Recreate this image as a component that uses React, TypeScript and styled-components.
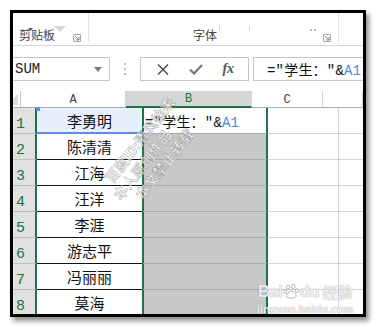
import * as React from 'react';
import styled, { createGlobalStyle } from 'styled-components';

const GlobalStyle = createGlobalStyle`
  html, body { margin: 0; padding: 0; background: #fff; }
  body {
    width: 377px;
    height: 327px;
    overflow: hidden;
    font-family: "Noto Sans CJK SC", sans-serif;
  }
`;

const GREEN = '#217346';

const Page = styled.div`
  padding: 10px 0 0 10px;
`;

const Frame = styled.div`
  position: relative;
  width: 350px;
  height: 301px;
  border: 3px solid #000;
  box-shadow: 3px 4px 5px rgba(0, 0, 0, 0.45);
  overflow: hidden;
  background: #fff;
  display: flex;
  flex-direction: column;
`;

/* ribbon */
const Ribbon = styled.div`
  height: 32px;
  flex-shrink: 0;
  display: flex;
  border-bottom: 1px solid #d4d4d4;
`;

const Group = styled.div<{ $w: number }>`
  position: relative;
  width: ${p => p.$w}px;
  flex-shrink: 0;
  box-sizing: border-box;
  display: flex;
  align-items: flex-end;
  justify-content: space-between;
  padding: 0 8px 3px 6px;
  &::after {
    content: '';
    position: absolute;
    right: 0;
    top: 0;
    bottom: 3px;
    width: 1px;
    background: #e1e1e1;
  }
`;

const GroupLabel = styled.span<{ $offset?: number }>`
  font-size: 12px;
  line-height: 14px;
  color: #444;
  margin-left: ${p => p.$offset ?? 0}px;
`;

const TopMark = styled.div<{ $x: number }>`
  position: absolute;
  top: 0;
  left: ${p => p.$x}px;
`;

/* formula bar */
const FormulaBar = styled.div`
  height: 45px;
  flex-shrink: 0;
  box-sizing: border-box;
  padding-top: 11px;
  display: flex;
  align-items: flex-start;
`;

const NameBox = styled.div`
  width: 97px;
  height: 24px;
  box-sizing: border-box;
  border: 1px solid #c6c6c6;
  border-left: none;
  display: flex;
  align-items: center;
  justify-content: space-between;
  padding: 0 7px 0 2px;
  font-family: "Liberation Mono", monospace;
  font-size: 14px;
  color: #222;
`;

const Grip = styled.div`
  width: 30px;
  height: 24px;
  display: flex;
  align-items: center;
  justify-content: center;
`;

const ButtonBox = styled.div`
  width: 109px;
  height: 24px;
  box-sizing: border-box;
  border: 1px solid #c6c6c6;
  display: flex;
  align-items: center;
  justify-content: space-around;
  padding: 0 4px 0 6px;
`;

const FxLabel = styled.span`
  font-family: "Liberation Serif", serif;
  font-style: italic;
  font-weight: bold;
  font-size: 14px;
  color: #555;
`;

const FormulaInput = styled.div`
  flex: 1;
  margin-left: 4px;
  height: 24px;
  box-sizing: border-box;
  border: 1px solid #c6c6c6;
  border-right: none;
  display: flex;
  align-items: center;
  padding-left: 13px;
  white-space: nowrap;
`;

const Formula = styled.span`
  font-family: "Liberation Mono", "Noto Sans CJK SC", monospace;
  font-size: 14px;
  color: #111;
  letter-spacing: 0.2px;
`;

const Ref = styled.span`
  color: #4f86e0;
`;

/* sheet */
const Sheet = styled.div`
  flex: 1;
  display: flex;
  flex-direction: column;
  overflow: hidden;
`;

const Row = styled.div<{ $h: number }>`
  display: flex;
  height: ${p => p.$h}px;
  flex-shrink: 0;
`;

const Corner = styled.div`
  position: relative;
  width: 24px;
  box-sizing: border-box;
  border-bottom: 1px solid #ababab;
  border-right: 1px solid #c6c6c6;
  background: #fff;
`;

const ColHead = styled.div<{ $w: number; $sel?: boolean }>`
  width: ${p => p.$w}px;
  flex-shrink: 0;
  box-sizing: border-box;
  display: flex;
  align-items: center;
  justify-content: center;
  font-family: "Liberation Mono", monospace;
  font-size: 12px;
  padding-top: 1px;
  color: ${p => (p.$sel ? GREEN : '#444')};
  background: ${p => (p.$sel ? '#d6d6d6' : '#fff')};
  border-right: 1px solid ${p => (p.$sel ? '#d6d6d6' : '#d4d4d4')};
  border-bottom: ${p => (p.$sel ? `2px solid ${GREEN}` : '1px solid #ababab')};
`;

const RowHead = styled.div`
  width: 24px;
  flex-shrink: 0;
  box-sizing: border-box;
  background: #e1e1e1;
  border-right: 2px solid ${GREEN};
  border-bottom: 1px solid #c0c0c0;
  display: flex;
  align-items: flex-end;
  padding: 0 0 0 3px;
  font-family: "Liberation Mono", monospace;
  font-size: 15px;
  line-height: 17px;
  color: ${GREEN};
`;

const NameCell = styled.div<{ $active?: boolean }>`
  position: relative;
  width: 105px;
  flex-shrink: 0;
  box-sizing: border-box;
  display: flex;
  align-items: center;
  justify-content: center;
  font-size: 15px;
  color: #111;
  background: ${p => (p.$active ? '#e8effc' : '#fff')};
  border-bottom: ${p => (p.$active ? '2px solid #5b8ee6' : '1px solid #111')};
`;

const Handle = styled.span<{ $pos: 'tl' | 'br' }>`
  position: absolute;
  width: 4px;
  height: 4px;
  background: #5b8ee6;
  ${p => (p.$pos === 'tl' ? 'left: -1px; top: -1px;' : 'right: -2px; bottom: -3px;')}
`;

const BCell = styled.div<{ $fill: boolean }>`
  width: 126px;
  flex-shrink: 0;
  box-sizing: border-box;
  border-left: 2px solid ${GREEN};
  border-right: 2px solid ${GREEN};
  border-bottom: 1px solid #a9a9a9;
  background: ${p => (p.$fill ? '#c8c8c8' : '#fff')};
  display: flex;
  align-items: center;
  padding-left: 1px;
  white-space: nowrap;
`;

const GridCell = styled.div<{ $w: number }>`
  width: ${p => p.$w}px;
  flex-shrink: 0;
  box-sizing: border-box;
  border-right: 1px solid #d4d4d4;
  border-bottom: 1px solid #d4d4d4;
`;

/* watermarks */
const Stamp = styled.div`
  position: absolute;
  left: 70px;
  top: 112px;
  width: 140px;
  transform: rotate(-52deg);
  display: flex;
  flex-direction: column;
  gap: 1px;
  font-size: 14px;
  font-weight: bold;
  line-height: 16px;
  color: rgba(255, 255, 255, 0.75);
  -webkit-text-stroke: 0.6px rgba(110, 110, 110, 0.55);
  pointer-events: none;
  white-space: nowrap;
`;

const StampLine = styled.span<{ $indent: number }>`
  padding-left: ${p => p.$indent}px;
`;

const BaiduMark = styled.div`
  position: absolute;
  left: 244px;
  top: 269px;
  width: max-content;
  white-space: nowrap;
  display: flex;
  flex-direction: column;
  align-items: center;
  color: rgba(255, 255, 255, 0.85);
  text-shadow: 0 0 1px rgba(110, 110, 110, 0.8);
  pointer-events: none;
`;

const BaiduLogo = styled.div`
  display: flex;
  align-items: center;
  font-family: "Liberation Sans", sans-serif;
  font-weight: bold;
  font-size: 16px;
  line-height: 19px;
`;

const BaiduJy = styled.span`
  font-family: "Noto Sans CJK SC", sans-serif;
  font-size: 15px;
  margin-left: 3px;
`;

const BaiduUrl = styled.span`
  font-family: "Liberation Sans", sans-serif;
  font-size: 11px;
  font-weight: bold;
  line-height: 12px;
  margin-top: 2px;
`;

const names = ['李勇明', '陈清清', '江海', '汪洋', '李涯', '游志平', '冯丽丽', '莫海'];

function FormulaText() {
  return (
    <Formula>
      =″学生：″&amp;<Ref>A1</Ref>
    </Formula>
  );
}

function Launcher() {
  return (
    <svg width="8" height="8" viewBox="0 0 8 8">
      <path d="M0.5 0.5h7v7h-7z" fill="none" stroke="#aaa" />
      <path d="M2 2l4 4M6 3v3h-3" fill="none" stroke="#888" />
    </svg>
  );
}

export default function App() {
  return (
    <Page>
      <GlobalStyle />
      <Frame>
        <Ribbon>
          <Group $w={76}>
            <TopMark $x={14}>
              <svg width="8" height="5" viewBox="0 0 8 5">
                <path d="M1 1h5L3.5 4z" fill="#555" />
              </svg>
            </TopMark>
            <TopMark $x={40}>
              <svg width="14" height="6" viewBox="0 0 14 6">
                <path d="M1 0h12L7 6z" fill="#d8d8d8" />
              </svg>
            </TopMark>
            <GroupLabel>剪贴板</GroupLabel>
            <Launcher />
          </Group>
          <Group $w={250}>
            <TopMark $x={130}>
              <svg width="32" height="6" viewBox="0 0 32 6">
                <path d="M0.5 0v5M30.5 0v5" stroke="#d4d4d4" />
              </svg>
            </TopMark>
            <TopMark $x={220}>
              <svg width="8" height="3" viewBox="0 0 8 3">
                <path d="M1 0h2v2H1zM5 0h2v2H5z" fill="#bbb" />
              </svg>
            </TopMark>
            <GroupLabel $offset={98}>字体</GroupLabel>
            <Launcher />
          </Group>
        </Ribbon>

        <FormulaBar>
          <NameBox>
            <span>SUM</span>
            <svg width="8" height="5" viewBox="0 0 8 5">
              <path d="M0 0h8L4 5z" fill="#7a7a7a" />
            </svg>
          </NameBox>
          <Grip>
            <svg width="3" height="13" viewBox="0 0 3 13">
              <path d="M0 0h2v2H0zM0 5h2v2H0zM0 10h2v2H0z" fill="#bdbdbd" />
            </svg>
          </Grip>
          <ButtonBox>
            <svg width="12" height="11" viewBox="0 0 12 11">
              <path d="M1 0.5l10 10M11 0.5l-10 10" stroke="#444" strokeWidth="1.4" />
            </svg>
            <svg width="14" height="11" viewBox="0 0 14 11">
              <path d="M1 5.5l4 4L13 1" fill="none" stroke="#777" strokeWidth="2.2" />
            </svg>
            <FxLabel>fx</FxLabel>
          </ButtonBox>
          <FormulaInput>
            <FormulaText />
          </FormulaInput>
        </FormulaBar>

        <Sheet>
          <Row $h={17}>
            <Corner>
              <svg width="11" height="11" viewBox="0 0 11 11" style={{ position: 'absolute', right: 2, bottom: 2 }}>
                <path d="M11 0v11H0z" fill="#dadada" />
              </svg>
            </Corner>
            <ColHead $w={105}>A</ColHead>
            <ColHead $w={126} $sel>B</ColHead>
            <ColHead $w={71}>C</ColHead>
            <ColHead $w={40} />
          </Row>
          {names.map((n, i) => (
            <Row $h={26} key={n}>
              <RowHead>{i + 1}</RowHead>
              <NameCell $active={i === 0}>
                {i === 0 && <Handle $pos="tl" />}
                {n}
                {i === 0 && <Handle $pos="br" />}
              </NameCell>
              <BCell $fill={i > 0}>{i === 0 && <FormulaText />}</BCell>
              <GridCell $w={71} />
              <GridCell $w={40} />
            </Row>
          ))}
        </Sheet>

        <Stamp>
          <StampLine $indent={18}>百度ID:清风徐来</StampLine>
          <StampLine $indent={10}>本人原创作品</StampLine>
          <StampLine $indent={24}>本文禁止转载</StampLine>
        </Stamp>

        <BaiduMark>
          <BaiduLogo>
            Bai
            <svg width="17" height="17" viewBox="0 0 20 20">
              <g fill="rgba(255,255,255,0.85)" stroke="rgba(120,120,120,0.7)" strokeWidth="0.9">
                <ellipse cx="6" cy="5" rx="2" ry="2.6" />
                <ellipse cx="12" cy="4" rx="2" ry="2.6" />
                <ellipse cx="2.6" cy="10" rx="1.8" ry="2.2" />
                <ellipse cx="16.4" cy="9" rx="1.8" ry="2.2" />
                <path d="M5 17c-2-1 0-5 3-7 2-1 4-1 5 1 2 2 4 5 1 6-2 1-7 1-9 0z" />
              </g>
            </svg>
            du
            <BaiduJy>经验</BaiduJy>
          </BaiduLogo>
          <BaiduUrl>jingyan.baidu.com</BaiduUrl>
        </BaiduMark>
      </Frame>
    </Page>
  );
}
